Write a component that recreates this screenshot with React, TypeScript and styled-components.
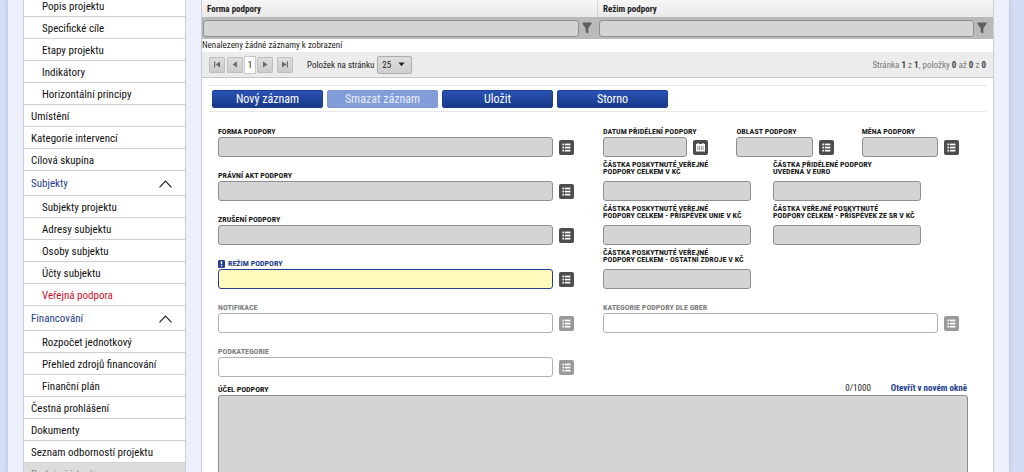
import React from "react";
import styled, { createGlobalStyle, css } from "styled-components";

const GlobalStyle = createGlobalStyle`
  *, *::before, *::after { box-sizing: border-box; }
  html, body, #root { height: 100%; }
  body {
    margin: 0;
    overflow: hidden;
    background: #d5dcf5;
    color: #1c1c1c;
    font-family: "Roboto Condensed", "Liberation Sans Narrow", Roboto, sans-serif;
    font-size: 11px;
  }
  button, input, select, textarea { font: inherit; color: inherit; margin: 0; }
`;

const Page = styled.div`
  display: flex;
  align-items: stretch;
  gap: 15px;
  height: 100%;
  margin: 0 15px 0 8px;
  padding: 0 15px;
  background: #ecf0fd;
  box-shadow: 0 0 4px #a9b3d0;
`;

const Sidebar = styled.nav`
  flex: 0 0 163px;
  height: 100%;
  overflow: hidden;
  border: solid #cfcfcf;
  border-width: 0 1px;
  background: #fff;
`;

const MenuList = styled.ul`
  margin: -5px 0 0;
  padding: 0;
  list-style: none;
`;

const MenuItem = styled.li`
  border-bottom: 1px solid #cfcfcf;
`;

type MenuKind = "sub" | "top" | "head" | "locked";

const MenuLink = styled.a<{ $kind: MenuKind; $active?: boolean }>`
  display: flex;
  align-items: center;
  justify-content: space-between;
  height: ${(p) => (p.$kind === "head" ? 24 : 21)}px;
  padding: 1px 13px 0 ${(p) => (p.$kind === "sub" ? 18 : 7)}px;
  color: ${(p) =>
    p.$active ? "#c8102e" : p.$kind === "head" ? "#24408e" : p.$kind === "locked" ? "#8a8a8a" : "#111"};
  background: ${(p) => (p.$kind === "locked" ? "#dcdcdc" : "#fff")};
  text-decoration: none;
  white-space: nowrap;
`;

const Main = styled.main`
  flex: 1;
  min-width: 0;
  height: 100%;
  overflow: hidden;
  border: solid #c8ccd6;
  border-width: 0 1px;
  background: #fff;
`;

const Table = styled.table`
  width: 100%;
  table-layout: fixed;
  border-collapse: collapse;
  font-size: 9px;
`;

const HeadCell = styled.th`
  height: 17px;
  padding: 0 5px;
  text-align: left;
  background: linear-gradient(#f6f6f6, #e9e9e9);
  & + & {
    border-left: 1px solid #d0d6dc;
  }
`;

const FilterCell = styled.td`
  height: 22px;
  padding: 0;
  background: #bababa;
`;

const FilterBox = styled.div`
  display: flex;
  align-items: center;
  gap: 3px;
  padding: 0 6px 0 1px;
`;

const field = css`
  min-width: 0;
  width: 100%;
  border: 1px solid #8f8f8f;
  border-radius: 3px;
  background: #d4d4d4;
  padding: 0 4px;
  outline: 0;
`;

const FilterInput = styled.input`
  ${field}
  height: 17px;
`;

const IconOnlyButton = styled.button`
  display: flex;
  flex: none;
  padding: 0;
  border: 0;
  background: none;
`;

const EmptyCell = styled.td`
  height: 13px;
  padding: 0;
  font-size: 9px;
  line-height: 13px;
`;

const Pager = styled.div`
  display: flex;
  align-items: center;
  height: 26px;
  padding: 0 7px;
  border-bottom: 1px solid #c6c6c6;
  background: #ececec;
  font-size: 9px;
`;

const PagerButtons = styled.div`
  display: flex;
  align-items: center;
  gap: 2px;
  margin-right: 14px;
`;

const PagerButton = styled.button<{ $end?: "first" | "last" }>`
  display: flex;
  align-items: center;
  justify-content: center;
  width: 16px;
  height: 16px;
  padding: 0;
  border: 1px solid #bdbdbd;
  border-radius: 1px;
  background: linear-gradient(#dedede, #cbcbcb);
  margin-left: ${(p) => (p.$end === "last" ? 2 : 0)}px;
`;

const CurrentPage = styled.span`
  width: 12px;
  margin: 0 -1px;
  line-height: 16px;
  text-align: center;
  background: #fff;
  border: 1px solid #c9c9c9;
`;

const SizeLabel = styled.label`
  display: flex;
  align-items: center;
  gap: 3px;
  white-space: nowrap;
`;

const SizeBox = styled.span`
  display: flex;
  align-items: center;
  height: 18px;
  padding-right: 6px;
  border: 1px solid #adadad;
  border-radius: 2px;
  background: linear-gradient(#dddddd, #cfcfcf);
`;

const SizeSelect = styled.select`
  width: 20px;
  height: 16px;
  padding: 0 0 0 4px;
  border: 0;
  background: transparent;
  appearance: none;
`;

const PagerInfo = styled.span`
  margin-left: auto;
  color: #777;
  white-space: nowrap;
  b {
    color: #444;
  }
`;

const Actions = styled.div`
  display: flex;
  gap: 4px;
  margin: 7px 7px 0;
  padding: 4px 3px 3px;
  border: solid #e6e6e6;
  border-width: 1px 0;
`;

const ActionButton = styled.button`
  flex: 0 1 111px;
  height: 18px;
  padding: 0;
  border: 1px solid #1c3f94;
  border-radius: 2px;
  background: linear-gradient(#2a53b4, #17398a);
  color: #fff;
  font-size: 12px;
  line-height: 16px;
  &:disabled {
    border-color: #7f99d6;
    background: #839dd8;
    color: #e6ecfa;
  }
`;

const Form = styled.form`
  padding: 1px 25px 0 16px;
`;

const FormRow = styled.div`
  display: grid;
  grid-template-columns: 1fr 1fr;
  column-gap: 29px;
  height: 44px;
  margin-right: 9px;
`;

const ShortFields = styled.div`
  display: grid;
  grid-template-columns: 13fr 12fr 12fr;
  column-gap: 28px;
`;

const AmountFields = styled.div`
  display: grid;
  grid-template-columns: 1fr 1fr;
  column-gap: 22px;
  padding-right: 38px;
`;

const FieldCell = styled.div`
  display: flex;
  flex-direction: column;
  justify-content: flex-end;
  min-width: 0;
`;

type Tone = "locked" | "required" | "inactive";

const labelColor: Record<Tone, string> = { locked: "#1a1a1a", required: "#24408e", inactive: "#7d7d7d" };

const Label = styled.label<{ $tone?: Tone; $double?: boolean }>`
  display: flex;
  align-items: center;
  gap: 3px;
  padding-bottom: ${(p) => (p.$double ? 6 : 0)}px;
  color: ${(p) => labelColor[p.$tone ?? "locked"]};
  font-size: 8px;
  font-weight: 700;
  line-height: ${(p) => (p.$double ? 7 : 10)}px;
  white-space: pre;
`;

const FieldLine = styled.div`
  display: flex;
  align-items: center;
  gap: 6px;
`;

const TextField = styled.input<{ $tone: Tone }>`
  ${field}
  height: 20px;
  ${(p) => p.$tone === "required" && "border-color: #24408e; background: #fefabc;"}
  ${(p) => p.$tone === "inactive" && "border-color: #b0b0b0; background: #fff;"}
`;

const Picker = styled.button<{ $muted?: boolean }>`
  display: flex;
  flex: none;
  width: 15px;
  height: 15px;
  padding: 0;
  border: 0;
  border-radius: 2px;
  background: ${(p) => (p.$muted ? "#999" : "#4d4d4d")};
`;

const AreaHeader = styled.div`
  display: flex;
  align-items: flex-end;
  height: 18px;
`;

const Counter = styled.span`
  margin-left: auto;
  font-size: 9px;
  line-height: 14px;
`;

const OpenLink = styled.a`
  margin: 0 1px 0 20px;
  color: #24408e;
  font-size: 9px;
  font-weight: 700;
  line-height: 14px;
  text-decoration: none;
`;

const Area = styled.textarea`
  ${field}
  display: block;
  height: 120px;
  resize: none;
`;

const ChevronUp = () => (
  <svg width="13" height="8" viewBox="0 0 13 8" fill="none" stroke="#222" strokeWidth="1.2" aria-hidden="true">
    <path d="M0.5 7.3 6.5 1 12.5 7.3" />
  </svg>
);

const Funnel = () => (
  <svg width="10" height="12" viewBox="0 0 10 12" fill="#5f5f5f" aria-hidden="true">
    <path d="M0.5 0.5h9v1.2L6.3 6.5v5L3.7 10.3V6.5L0.5 1.7z" />
  </svg>
);

const ListIcon = () => (
  <svg width="15" height="15" viewBox="0 0 15 15" fill="#fff" aria-hidden="true">
    {[3.6, 6.7, 9.8].map((y) => (
      <g key={y}>
        <rect x="3.4" y={y} width="1.8" height="1.7" />
        <rect x="6" y={y} width="5.4" height="1.7" />
      </g>
    ))}
  </svg>
);

const CalendarIcon = () => (
  <svg width="15" height="15" viewBox="0 0 15 15" aria-hidden="true">
    <path fill="#fff" d="M3 4h1.4V2.9h1.3V4h3.6V2.9h1.3V4H12v7.5H3z" />
    <path stroke="#4d4d4d" strokeWidth="0.6" d="M4.9 5.8v4.4M6.6 5.8v4.4M8.4 5.8v4.4M10.1 5.8v4.4" />
  </svg>
);

const RequiredMark = () => (
  <svg width="7" height="8" viewBox="0 0 7 8" aria-hidden="true">
    <rect width="7" height="8" rx="1.3" fill="#24408e" />
    <path fill="#fff" d="M2.8 1.3h1.4v3H2.8zM2.8 5.2h1.4v1.4H2.8z" />
  </svg>
);

const arrows = {
  first: "M1 0.5h1.2v6H1zM7 0.5v6L2.6 3.5z",
  prev: "M6 0.5v6L1.5 3.5z",
  next: "M2 0.5v6L6.5 3.5z",
  last: "M5.8 0.5H7v6H5.8zM1 0.5v6L5.4 3.5z",
};

const Arrow = ({ kind }: { kind: keyof typeof arrows }) => (
  <svg width="8" height="7" viewBox="0 0 8 7" fill="#6a6a6a" aria-hidden="true">
    <path d={arrows[kind]} />
  </svg>
);

const menu: { text: string; kind: MenuKind; active?: boolean }[] = [
  { text: "Popis projektu", kind: "sub" },
  { text: "Specifické cíle", kind: "sub" },
  { text: "Etapy projektu", kind: "sub" },
  { text: "Indikátory", kind: "sub" },
  { text: "Horizontální principy", kind: "sub" },
  { text: "Umístění", kind: "top" },
  { text: "Kategorie intervencí", kind: "top" },
  { text: "Cílová skupina", kind: "top" },
  { text: "Subjekty", kind: "head" },
  { text: "Subjekty projektu", kind: "sub" },
  { text: "Adresy subjektu", kind: "sub" },
  { text: "Osoby subjektu", kind: "sub" },
  { text: "Účty subjektu", kind: "sub" },
  { text: "Veřejná podpora", kind: "sub", active: true },
  { text: "Financování", kind: "head" },
  { text: "Rozpočet jednotkový", kind: "sub" },
  { text: "Přehled zdrojů financování", kind: "sub" },
  { text: "Finanční plán", kind: "sub" },
  { text: "Čestná prohlášení", kind: "top" },
  { text: "Dokumenty", kind: "top" },
  { text: "Seznam odborností projektu", kind: "top" },
  { text: "Podpis žádosti", kind: "locked" },
];

interface FieldProps {
  id: string;
  label: string;
  tone?: Tone;
  picker?: "list" | "calendar";
}

const Field = ({ id, label, tone = "locked", picker }: FieldProps) => (
  <FieldCell>
    <Label htmlFor={id} $tone={tone} $double={label.includes("\n")}>
      {tone === "required" && <RequiredMark />}
      {label}
    </Label>
    <FieldLine>
      <TextField id={id} $tone={tone} readOnly />
      {picker && (
        <Picker type="button" $muted={tone === "inactive"} aria-label={label}>
          {picker === "list" ? <ListIcon /> : <CalendarIcon />}
        </Picker>
      )}
    </FieldLine>
  </FieldCell>
);

const columns = ["Forma podpory", "Režim podpory"];

export default function App() {
  return (
    <>
      <GlobalStyle />
      <Page>
        <Sidebar>
          <MenuList>
            {menu.map((m) => (
              <MenuItem key={m.text}>
                <MenuLink href="#" $kind={m.kind} $active={m.active}>
                  {m.text}
                  {m.kind === "head" && <ChevronUp />}
                </MenuLink>
              </MenuItem>
            ))}
          </MenuList>
        </Sidebar>
        <Main>
          <Table>
            <thead>
              <tr>
                {columns.map((c) => (
                  <HeadCell key={c}>{c}</HeadCell>
                ))}
              </tr>
            </thead>
            <tbody>
              <tr>
                {columns.map((c) => (
                  <FilterCell key={c}>
                    <FilterBox>
                      <FilterInput aria-label={c} />
                      <IconOnlyButton type="button" aria-label="Filtr">
                        <Funnel />
                      </IconOnlyButton>
                    </FilterBox>
                  </FilterCell>
                ))}
              </tr>
              <tr>
                <EmptyCell colSpan={2}>Nenalezeny žádné záznamy k zobrazení</EmptyCell>
              </tr>
            </tbody>
          </Table>
          <Pager>
            <PagerButtons>
              <PagerButton type="button" $end="first" aria-label="První">
                <Arrow kind="first" />
              </PagerButton>
              <PagerButton type="button" aria-label="Předchozí">
                <Arrow kind="prev" />
              </PagerButton>
              <CurrentPage>1</CurrentPage>
              <PagerButton type="button" aria-label="Další">
                <Arrow kind="next" />
              </PagerButton>
              <PagerButton type="button" $end="last" aria-label="Poslední">
                <Arrow kind="last" />
              </PagerButton>
            </PagerButtons>
            <SizeLabel>
              Položek na stránku
              <SizeBox>
                <SizeSelect defaultValue="25">
                  <option>25</option>
                </SizeSelect>
                <svg width="7" height="5" viewBox="0 0 7 5" fill="#222" aria-hidden="true">
                  <path d="M0.5 0.5h6L3.5 4.3z" />
                </svg>
              </SizeBox>
            </SizeLabel>
            <PagerInfo>
              Stránka <b>1</b> z <b>1</b>, položky <b>0</b> až <b>0</b> z <b>0</b>
            </PagerInfo>
          </Pager>
          <Actions>
            <ActionButton type="button">Nový záznam</ActionButton>
            <ActionButton type="button" disabled>
              Smazat záznam
            </ActionButton>
            <ActionButton type="button">Uložit</ActionButton>
            <ActionButton type="button">Storno</ActionButton>
          </Actions>
          <Form>
            <FormRow>
              <Field id="forma" label="FORMA PODPORY" picker="list" />
              <ShortFields>
                <Field id="datum" label="DATUM PŘIDĚLENÍ PODPORY" picker="calendar" />
                <Field id="oblast" label="OBLAST PODPORY" picker="list" />
                <Field id="mena" label="MĚNA PODPORY" picker="list" />
              </ShortFields>
            </FormRow>
            <FormRow>
              <Field id="akt" label="PRÁVNÍ AKT PODPORY" picker="list" />
              <AmountFields>
                <Field id="celkem" label={"ČÁSTKA POSKYTNUTÉ VEŘEJNÉ\nPODPORY CELKEM V KČ"} />
                <Field id="euro" label={"ČÁSTKA PŘIDĚLENÉ PODPORY\nUVEDENÁ V EURO"} />
              </AmountFields>
            </FormRow>
            <FormRow>
              <Field id="zruseni" label="ZRUŠENÍ PODPORY" picker="list" />
              <AmountFields>
                <Field id="unie" label={"ČÁSTKA POSKYTNUTÉ VEŘEJNÉ\nPODPORY CELKEM - PŘÍSPĚVEK UNIE V KČ"} />
                <Field id="sr" label={"ČÁSTKA VEŘEJNÉ POSKYTNUTÉ\nPODPORY CELKEM - PŘÍSPĚVEK ZE SR V KČ"} />
              </AmountFields>
            </FormRow>
            <FormRow>
              <Field id="rezim" label="REŽIM PODPORY" tone="required" picker="list" />
              <AmountFields>
                <Field id="ostatni" label={"ČÁSTKA POSKYTNUTÉ VEŘEJNÉ\nPODPORY CELKEM - OSTATNÍ ZDROJE V KČ"} />
              </AmountFields>
            </FormRow>
            <FormRow>
              <Field id="notifikace" label="NOTIFIKACE" tone="inactive" picker="list" />
              <Field id="gber" label="KATEGORIE PODPORY DLE GBER" tone="inactive" picker="list" />
            </FormRow>
            <FormRow>
              <Field id="podkategorie" label="PODKATEGORIE" tone="inactive" picker="list" />
            </FormRow>
            <AreaHeader>
              <Label htmlFor="ucel">ÚČEL PODPORY</Label>
              <Counter>0/1000</Counter>
              <OpenLink href="#">Otevřít v novém okně</OpenLink>
            </AreaHeader>
            <Area id="ucel" readOnly />
          </Form>
        </Main>
      </Page>
    </>
  );
}
